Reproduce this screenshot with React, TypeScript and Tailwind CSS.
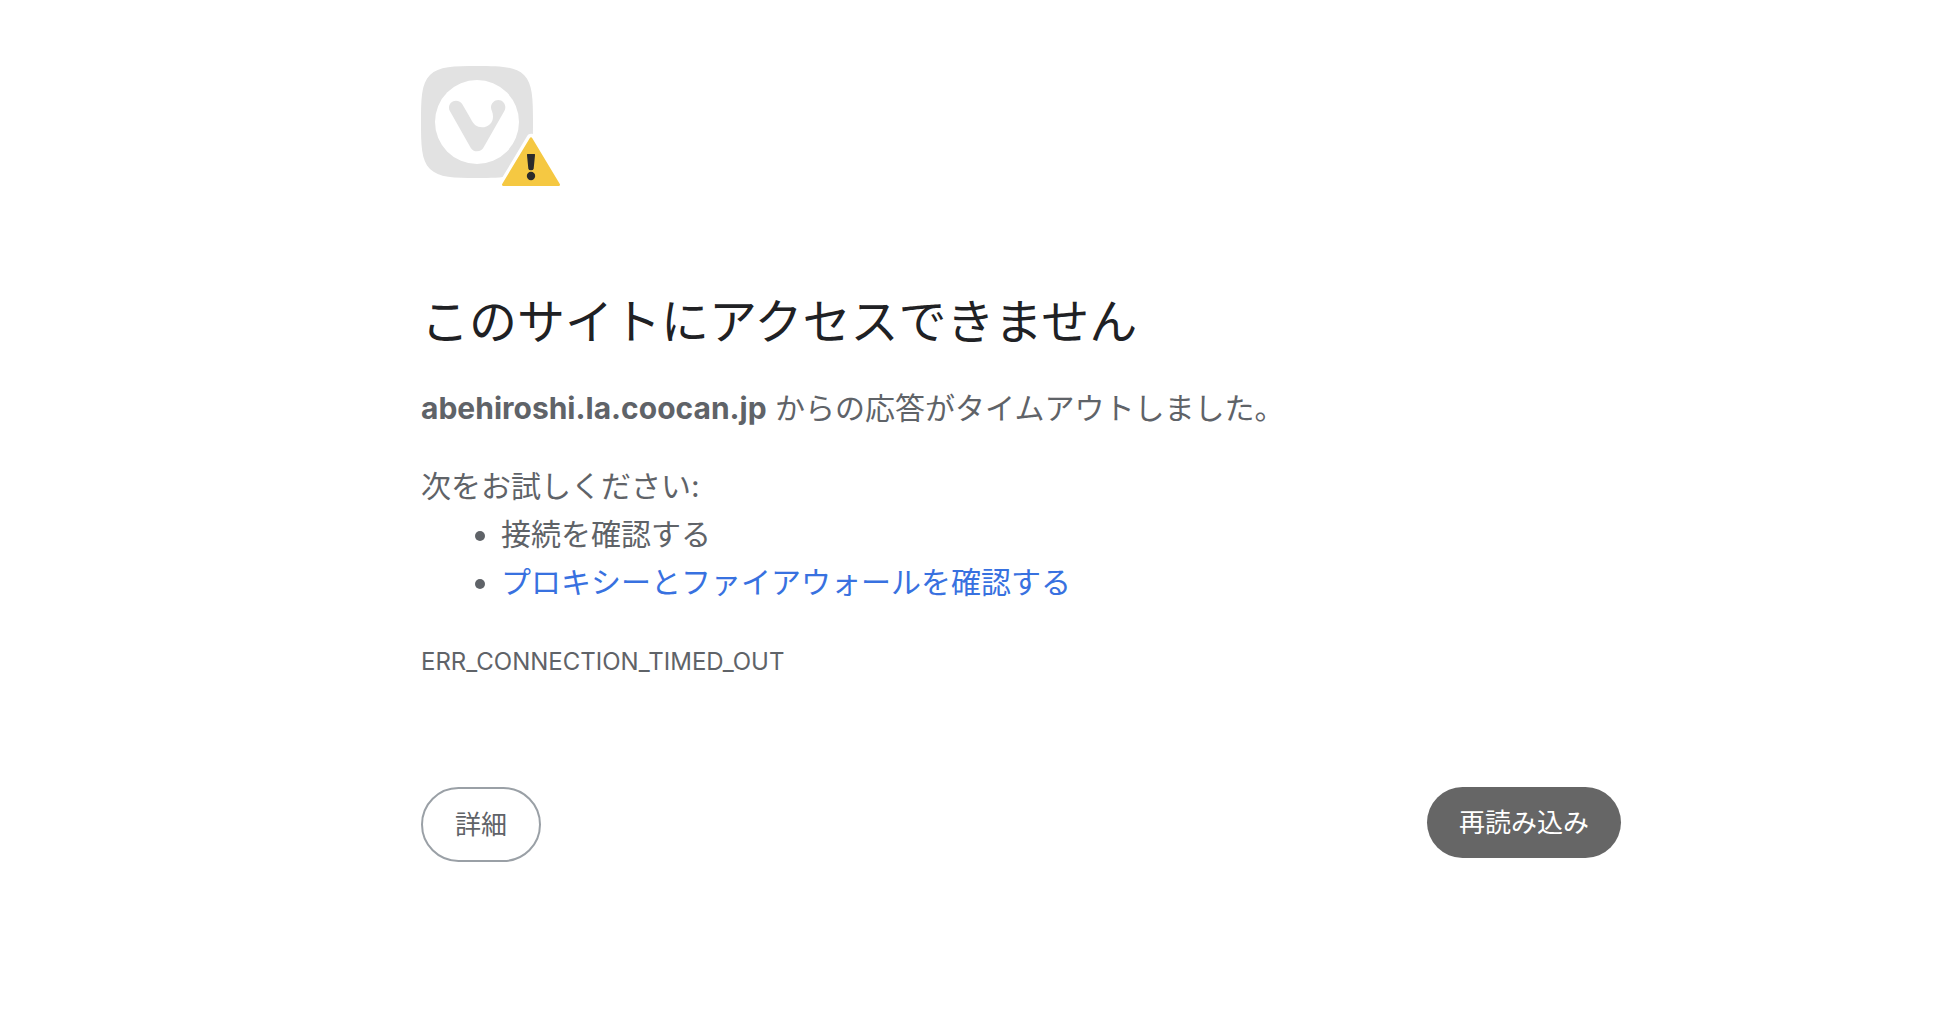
function ErrorIcon() {
  return (
    <svg viewBox="33 33 420 363" className="block h-[121px] w-[140px]" aria-hidden="true">
      <path
        fill="#e2e2e2"
        d="M201 33C270 33 316 34 342 60C368 86 369 132 369 201C369 270 368 316 342 342C316 368 270 369 201 369C132 369 86 368 60 342C34 316 33 270 33 201C33 132 34 86 60 60C86 34 132 33 201 33Z"
      />
      <circle cx="201" cy="201" r="126" fill="#fff" />
      <path
        fill="#e2e2e2"
        d="M138 137C146 137 153 141 157 148L183 193C190 208 201 217 216 217C235 217 249 203 249 185C249 179 248 174 246 169C244 165 243 161 243 157C243 145 253 135 265 135C277 135 286 145 286 157C286 161 285 165 283 168L221 277C217 285 210 289 201 289C193 289 186 285 182 278L120 169C118 166 117 162 117 158C117 146 126 137 138 137Z"
      />
      <path
        d="M363 249L278 391H448Z"
        fill="#fff"
        stroke="#fff"
        strokeWidth="26"
        strokeLinejoin="round"
      />
      <path
        d="M363 251L280 389H446Z"
        fill="#f5c842"
        stroke="#f5c842"
        strokeWidth="8"
        strokeLinejoin="round"
      />
      <path fill="#2b2b2b" d="M353 297H373Q376 297 375 301L371 341Q370 346 363 346Q356 346 355 341L351 301Q350 297 353 297Z" />
      <circle cx="363" cy="363" r="12.5" fill="#2b2b2b" />
    </svg>
  );
}

export default function App() {
  return (
    <div className="min-h-screen bg-white pl-[102px] font-['Inter','Noto_Sans_CJK_JP',sans-serif] text-[30px] leading-[48px] text-[#5f6368]">
      <main lang="ja" className="mx-auto max-w-[1200px] pt-[66px]">
        <ErrorIcon />
        <h1 className="mt-[106px] text-5xl leading-[58px] text-[#202124]">
          このサイトにアクセスできません
        </h1>
        <p className="mt-[33px]">
          <strong className="font-bold">abehiroshi.la.coocan.jp</strong> からの応答がタイムアウトしました。
        </p>
        <p className="mt-[30px]">次をお試しください:</p>
        <ul className="list-disc pl-20">
          <li>接続を確認する</li>
          <li>
            <a href="#proxy" className="text-[#3871e0]">
              プロキシーとファイアウォールを確認する
            </a>
          </li>
        </ul>
        <p className="mt-8 text-2xl leading-[48px]">ERR_CONNECTION_TIMED_OUT</p>
        <div className="mt-[101px] flex items-start justify-between text-[26px]">
          <button
            type="button"
            className="rounded-full border-2 border-[#9aa0a6] px-8 py-3 leading-[47px]"
          >
            詳細
          </button>
          <button
            type="button"
            className="rounded-full bg-[#666666] px-8 py-3 leading-[47px] text-white"
          >
            再読み込み
          </button>
        </div>
      </main>
    </div>
  );
}
